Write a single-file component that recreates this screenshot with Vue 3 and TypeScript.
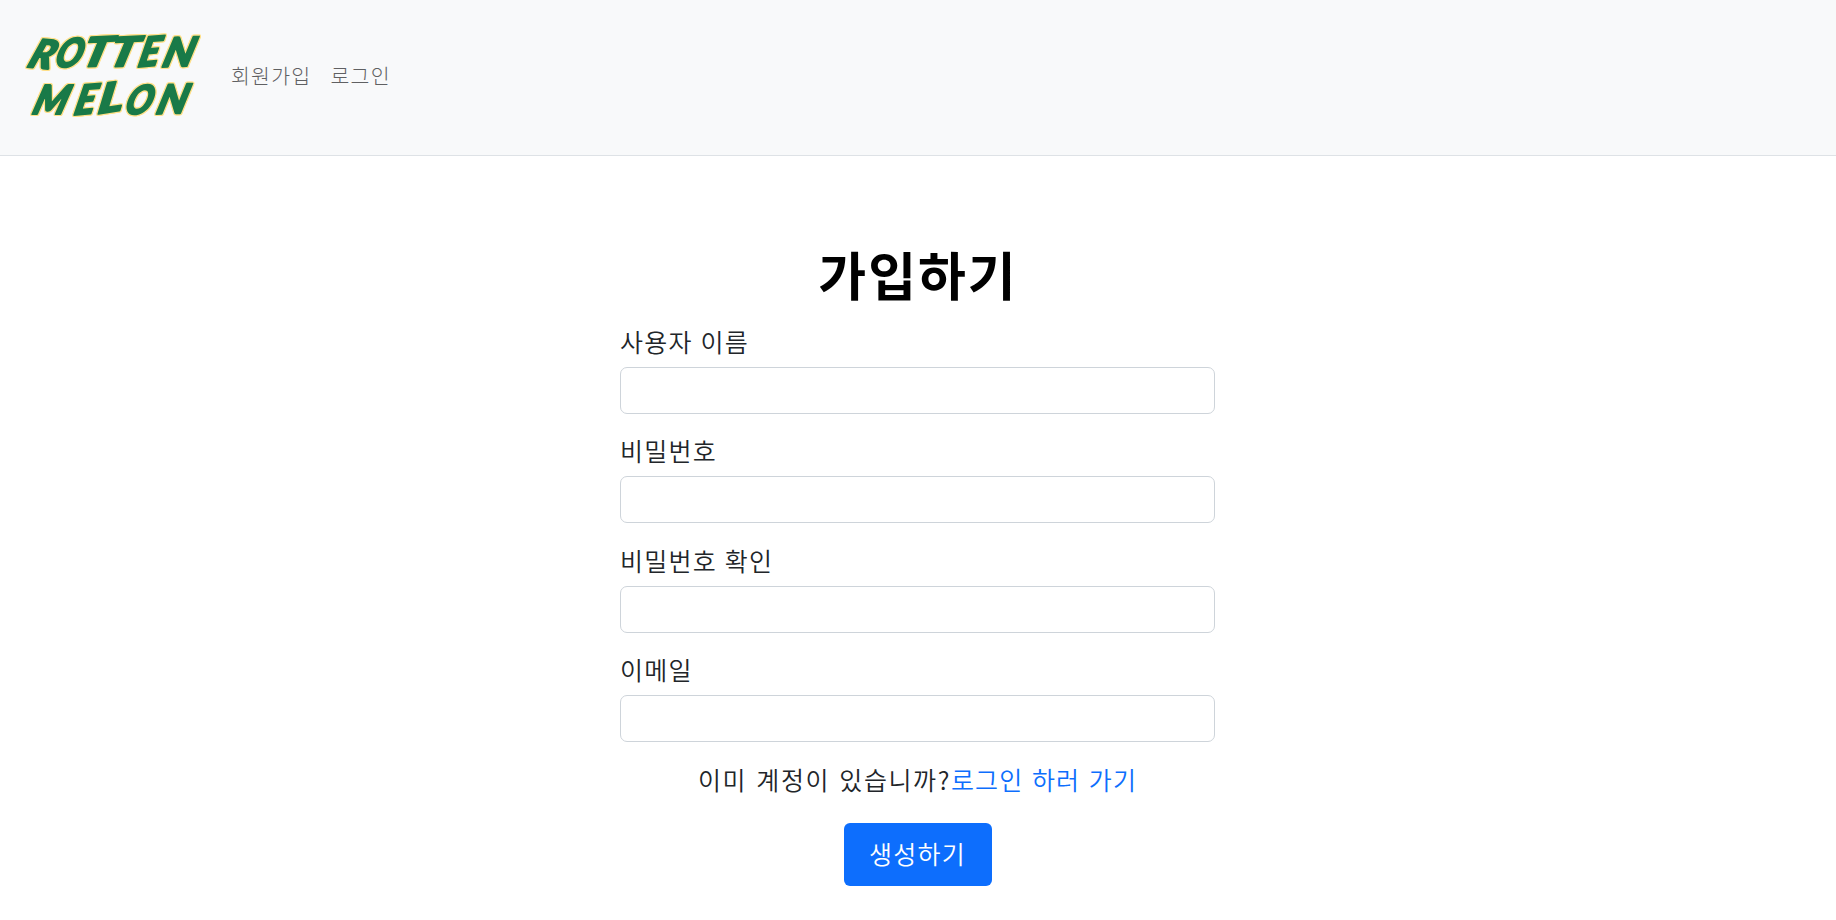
<template>
  <div class="page">
    <nav class="navbar">
      <a class="brand" href="#" aria-label="Rotten Melon">
        <svg class="logo" viewBox="0 0 180 90" width="180" height="90">
          <g v-for="line in logo" :key="line.y">
            <text
              v-for="(l, i) in line.letters"
              :key="i"
              :transform="`translate(${l.x} ${line.y + l.dy}) rotate(${l.r}) skewX(-18) scale(${l.s} 1)`"
            >{{ l.c }}</text>
          </g>
        </svg>
      </a>
      <a v-for="m in menus" :key="m" class="nav-link" href="#">{{ m }}</a>
    </nav>

    <main class="signup">
      <h1>가입하기</h1>
      <form @submit.prevent>
        <div v-for="f in fields" :key="f.id" class="field">
          <label :for="f.id">{{ f.label }}</label>
          <input :id="f.id" v-model="form[f.id]" :type="f.type">
        </div>
        <p class="guide">이미 계정이 있습니까?<a href="#">로그인 하러 가기</a></p>
        <button type="submit">생성하기</button>
      </form>
    </main>
  </div>
</template>

<script setup lang="ts">
import { reactive } from 'vue'

interface Field { id: string; label: string; type: string }

const menus = ['회원가입', '로그인']
const fields: Field[] = [
  { id: 'username', label: '사용자 이름', type: 'text' },
  { id: 'password1', label: '비밀번호', type: 'password' },
  { id: 'password2', label: '비밀번호 확인', type: 'password' },
  { id: 'email', label: '이메일', type: 'email' },
]
const form = reactive<Record<string, string>>({ username: '', password1: '', password2: '', email: '' })

// x: left edge, dy: baseline shift, r: tilt, s: horizontal stretch
const logo = [
  { y: 35, letters: [
    { c: 'R', x: 2, dy: 0, r: 5, s: 0.98 }, { c: 'O', x: 29, dy: 0, r: 0, s: 0.86 }, { c: 'T', x: 56, dy: 0, r: -3, s: 1.25 },
    { c: 'T', x: 83, dy: 0, r: -3, s: 1.25 }, { c: 'E', x: 113, dy: 0, r: -5, s: 0.96 }, { c: 'N', x: 137, dy: 0, r: -2, s: 1.05 },
  ] },
  { y: 82, letters: [
    { c: 'M', x: 7, dy: 0, r: 0, s: 0.95 }, { c: 'E', x: 49, dy: 1, r: -5, s: 0.96 }, { c: 'L', x: 73, dy: 0, r: -9, s: 1.3 },
    { c: 'O', x: 99, dy: 0, r: 0, s: 0.86 }, { c: 'N', x: 131, dy: 0, r: -2, s: 1.03 },
  ] },
]
</script>

<style>
body { margin: 0; background: #fff }
</style>

<style scoped>
.page { font-family: "Noto Sans CJK KR", sans-serif; color: #212529; letter-spacing: 1.25px; word-spacing: 1px }
a { text-decoration: none }
.navbar { display: flex; align-items: center; box-sizing: border-box; height: 156px; padding: 0 24px 6px; background: #f8f9fa; border-bottom: 1px solid #dee2e6 }
.brand { display: flex; margin-right: 27px; padding-top: 4px }
/* yellow rim around the whole wordmark */
.logo { overflow: visible; filter: drop-shadow(1px 0 0 #ffe08a) drop-shadow(-1px 0 0 #ffe08a) drop-shadow(0 1px 0 #ffe08a) drop-shadow(0 -1px 0 #ffe08a) }
.logo text { font: italic 900 40px Lato, sans-serif; letter-spacing: 0; fill: #197a48; stroke: #197a48; stroke-width: 2px; stroke-linejoin: round }
.nav-link { margin-right: 19px; font-size: 20.5px; font-weight: 300; line-height: 30px; color: #5f6062 }
.signup { display: flex; flex-direction: column; align-items: center; padding-top: 78px }
h1 { margin: 0 0 8px; font-size: 52px; font-weight: 700; line-height: 80px; letter-spacing: 2px; color: #000 }
form { display: flex; flex-direction: column; align-items: center; width: 595px; margin-right: 1px }
.field { width: 100%; margin-bottom: 17.4px }
label { display: block; margin-bottom: 7px; font-size: 25px; font-weight: 350; line-height: 38px }
input { display: block; box-sizing: border-box; width: 100%; height: 47px; padding: 6px 12px; font: inherit; border: 1px solid #ced4da; border-radius: 7px; background: #fff }
.guide { margin: 0 0 25.4px; font-size: 25px; font-weight: 350; line-height: 38px; letter-spacing: 1.6px; word-spacing: 2px }
.guide a { color: #0d6efd; letter-spacing: 1.1px }
button { width: 148px; height: 63px; padding: 0 0 2px; border: 0; border-radius: 6px; background: #0d6efd; color: #fff; font-family: inherit; font-size: 25px; font-weight: 350; letter-spacing: inherit; cursor: pointer }
</style>
